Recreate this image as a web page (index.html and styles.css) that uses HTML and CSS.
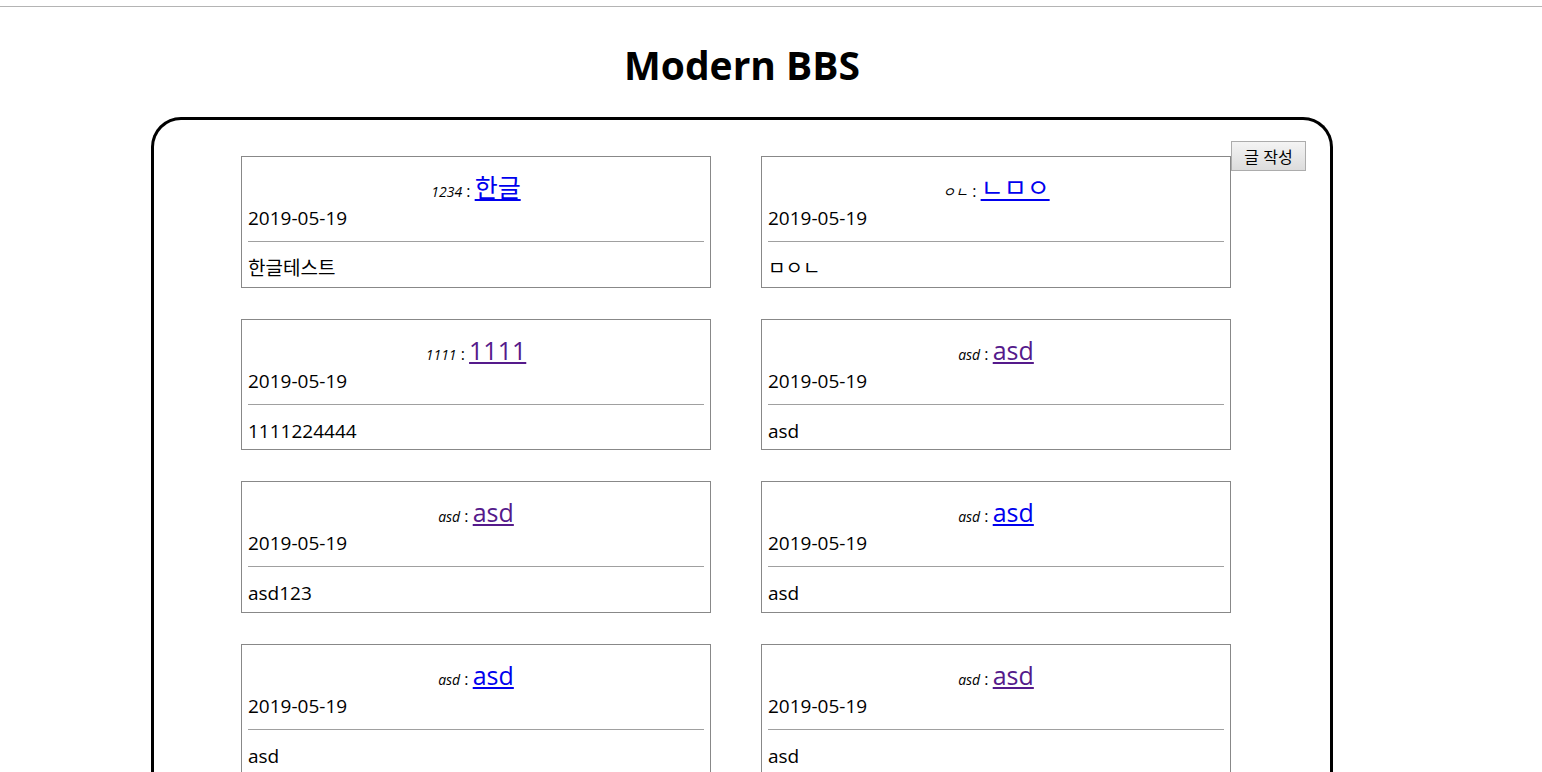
FILE: index.html
```html
<!DOCTYPE html>
<html lang="ko">
<head>
<meta charset="utf-8">
<title>Modern BBS</title>
<link rel="stylesheet" href="styles.css">
</head>
<body>
<div class="topline"></div>
<div class="page">
  <h1 class="site-title">Modern BBS</h1>
  <div class="board">
    <div class="cards">
      <div class="card">
        <div class="card-head"><span class="author">1234</span> : <a class="subject" href="#a1">한글</a></div>
        <div class="date">2019-05-19</div>
        <hr class="sep">
        <div class="body">한글테스트</div>
      </div>
      <div class="card">
        <div class="card-head"><span class="author">ㅇㄴ</span> : <a class="subject" href="#a2">ㄴㅁㅇ</a></div>
        <div class="date">2019-05-19</div>
        <hr class="sep">
        <div class="body">ㅁㅇㄴ</div>
      </div>
      <div class="card">
        <div class="card-head"><span class="author">1111</span> : <a class="subject visited" href="#a3">1111</a></div>
        <div class="date">2019-05-19</div>
        <hr class="sep">
        <div class="body">1111224444</div>
      </div>
      <div class="card">
        <div class="card-head"><span class="author">asd</span> : <a class="subject visited" href="#a4">asd</a></div>
        <div class="date">2019-05-19</div>
        <hr class="sep">
        <div class="body">asd</div>
      </div>
      <div class="card">
        <div class="card-head"><span class="author">asd</span> : <a class="subject visited" href="#a5">asd</a></div>
        <div class="date">2019-05-19</div>
        <hr class="sep">
        <div class="body">asd123</div>
      </div>
      <div class="card">
        <div class="card-head"><span class="author">asd</span> : <a class="subject" href="#a6">asd</a></div>
        <div class="date">2019-05-19</div>
        <hr class="sep">
        <div class="body">asd</div>
      </div>
      <div class="card">
        <div class="card-head"><span class="author">asd</span> : <a class="subject" href="#a7">asd</a></div>
        <div class="date">2019-05-19</div>
        <hr class="sep">
        <div class="body">asd</div>
      </div>
      <div class="card">
        <div class="card-head"><span class="author">asd</span> : <a class="subject visited" href="#a8">asd</a></div>
        <div class="date">2019-05-19</div>
        <hr class="sep">
        <div class="body">asd</div>
      </div>
    </div>
    <button class="write-btn" type="button">글 작성</button>
  </div>
</div>
</body>
</html>
```

FILE: styles.css
```css
html, body {
  margin: 0;
  padding: 0;
  background: #fff;
  color: #000;
  font-family: "Open Sans", "Noto Sans CJK KR", sans-serif;
}

.topline {
  height: 6px;
  border-bottom: 1px solid #b4b4b4;
}

.page {
  width: 1182px;
  margin-left: 151px;
}

.site-title {
  margin: 33px 0 0;
  height: 50px;
  line-height: 50px;
  font-size: 39px;
  font-weight: 700;
  text-align: center;
}

.board {
  margin-top: 27px;
  border: 3px solid #000;
  border-bottom: none;
  border-radius: 30px 30px 0 0;
  padding: 21px 24px 40px 87px;
  display: flex;
  align-items: flex-start;
  min-height: 700px;
}

.cards {
  margin-top: 15px;
  display: grid;
  grid-template-columns: 470px 470px;
  column-gap: 50px;
  row-gap: 31px;
}

.card {
  border: 1px solid #888;
  padding: 14px 6px 5.5px;
}

.card-head {
  height: 32px;
  line-height: 32px;
  text-align: center;
  font-size: 16px;
  white-space: nowrap;
}

.author {
  font-style: italic;
  font-size: 14px;
}

.subject {
  font-size: 25px;
  color: #0000ee;
  text-decoration: underline;
}

.subject.visited {
  color: #551a8b;
}

.date {
  margin-top: 3px;
  height: 24px;
  line-height: 24px;
  font-size: 19px;
}

.sep {
  margin: 11px 0 0;
  border: none;
  border-top: 1px solid #a0a0a0;
  height: 0;
}

.body {
  margin-top: 13px;
  height: 26px;
  line-height: 26px;
  font-size: 19px;
}

.write-btn {
  flex: none;
  width: 75px;
  height: 30px;
  padding: 0;
  font-family: "Noto Sans CJK KR", sans-serif;
  font-size: 16px;
  color: #000;
  background: linear-gradient(#f4f4f4, #dcdcdc);
  border: 1px solid #acacac;
  border-radius: 0;
}
```
